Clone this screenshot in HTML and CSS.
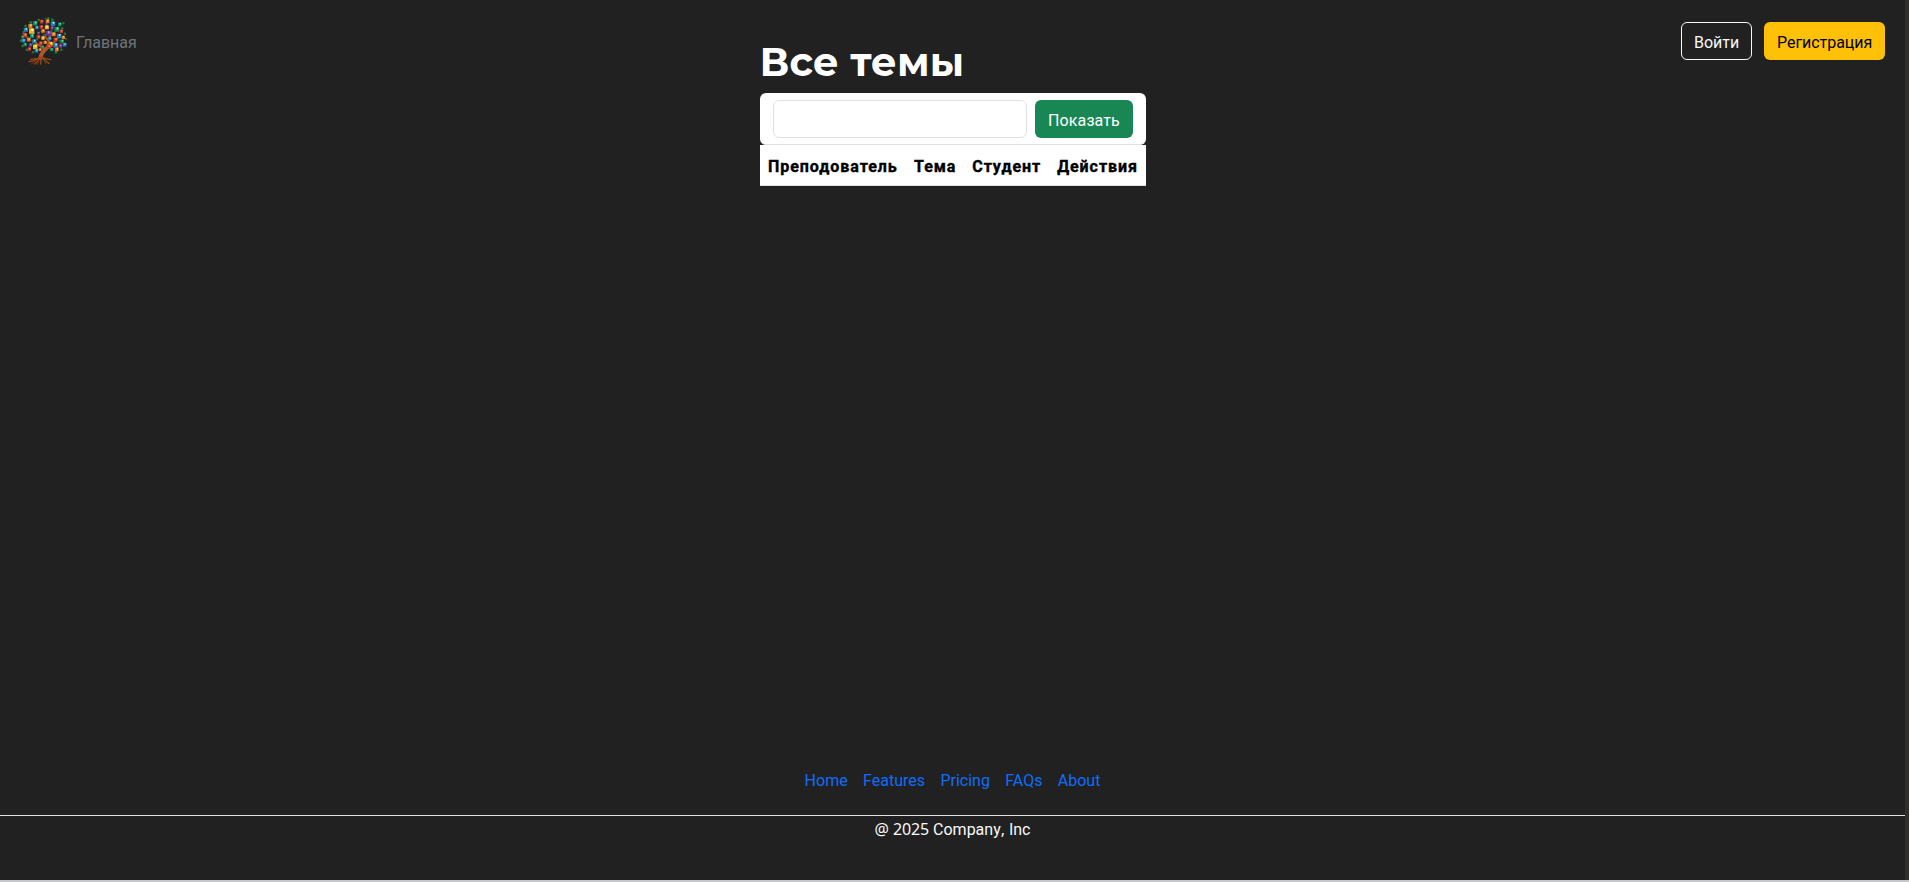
FILE: index.html
```html
<!DOCTYPE html>
<html lang="ru">
<head>
<meta charset="utf-8">
<title>Все темы</title>
<link rel="stylesheet" href="styles.css">
</head>
<body>
<div class="page">
<header class="header">
  <a class="brand" href="#">
    <svg class="tree" viewBox="0 0 180 168" id="tree" aria-hidden="true">
      <g fill="none" stroke="#ab5728" stroke-linecap="round">
        <path stroke-width="12" d="M79 139Q80 124 96 110"/>
        <path stroke-width="6" d="M88 118Q104 105 105 80M94 112Q117 104 122 89L133 76M91 112Q78 101 63 91M104 87L91 70M105 80L111 62"/>
        <path stroke-width="4" stroke="#984719" d="M76 136Q67 146 45 149M78 137Q72 148 62 156M81 137L80 156M84 136Q92 147 105 154M82 135Q94 142 110 143M73 139L50 142"/>
        <path stroke-width="3" stroke="#703819" d="M64 147L52 156M90 145L95 155M75 148L70 157M63 91L49 85M117 99L142 94M91 71L80 57"/>
      </g>
    </svg>
  </a>
  <a class="nav-link" href="#">Главная</a>
  <div class="auth">
    <a class="btn btn-outline" href="#">Войти</a>
    <a class="btn btn-warning" href="#">Регистрация</a>
  </div>
</header>
<main class="main">
  <h1 class="title">Все темы</h1>
  <form class="filter">
    <input class="field" type="text" aria-label="Преподователь">
    <button class="btn btn-success" type="button">Показать</button>
  </form>
  <table class="table">
    <thead><tr><th>Преподователь</th><th>Тема</th><th>Студент</th><th>Действия</th></tr></thead>
  </table>
</main>
<footer class="footer">
  <nav class="links"><a href="#">Home</a><a href="#">Features</a><a href="#">Pricing</a><a href="#">FAQs</a><a href="#">About</a></nav>
  <p class="copy"><span class="alt">@ 2025</span> Company<span class="alt">,</span> Inc</p>
</footer>
</div>
<script src="tree.js"></script>
</body>
</html>
```
FILE: styles.css
```css
* { box-sizing: border-box; }
html { background: #222; }
body {
  margin: 0;
  height: 882px;
  overflow: hidden;
  padding-right: 4px;
  background: #302f2d;
  border-bottom: 2px solid #c4c7cc;
  font: 16px/24px Roboto, sans-serif;
}
.page {
  height: 880px;
  display: flex;
  flex-direction: column;
  background: #212121;
  color: #fff;
}
a { text-decoration: none; }
.header {
  height: 82px;
  padding: 12px 20px 14px 14px;
  display: flex;
  align-items: center;
  margin-bottom: -42px;
}
.brand { display: flex; align-self: flex-start; }
.tree { width: 60px; height: 56px; }
.nav-link { color: #6c757d; padding: 5px 0 0 2px; }
.auth { margin-left: auto; display: flex; gap: 12px; align-self: flex-start; padding-top: 10px; }
.btn {
  height: 38px;
  padding: 8px 12px 4px;
  border: 1px solid transparent;
  border-radius: 6px;
  font: 16px/24px Roboto, sans-serif;
  white-space: nowrap;
}
.btn-outline { width: 71px; border-color: #f8f9fa; color: #f8f9fa; }
.btn-warning { width: 121px; background: #ffc107; color: #000; letter-spacing: -0.05px; }
.btn-success { width: 98px; padding-right: 11px; background: #198754; color: #fff; letter-spacing: 0.1px; }
.main { width: 386px; margin: 0 auto; display: flex; flex-direction: column; }
.title {
  margin: 0;
  height: 53px;
  font: 700 40px/44px Montserrat, Inter, sans-serif;
  letter-spacing: 0.15px;
  white-space: nowrap;
}
.filter {
  height: 52px;
  padding: 7px 13px;
  display: flex;
  gap: 8px;
  background: #fff;
  border-bottom: 1px solid #dee2e6;
  border-radius: 6px;
}
.field { width: 254px; height: 38px; border: 1px solid #dee2e6; border-radius: 6px; background: #fff; }
.table {
  width: 386px;
  height: 41px;
  border-collapse: collapse;
  background: #fff;
  color: #000;
  border-bottom: 1px solid #dee2e6;
}
.table th {
  padding: 10px 7px 6px 8.5px;
  font-weight: 700;
  text-align: left;
  line-height: 24px;
  letter-spacing: 0.95px;
  -webkit-text-stroke: 0.4px #000;
}
.footer { margin-top: auto; height: 112px; }
.links {
  height: 48px;
  padding-top: 1px;
  display: flex;
  justify-content: center;
  gap: 15.4px;
  border-bottom: 1px solid #dee2e6;
}
.links a { color: #0d6efd; }
.copy { margin: 2px 0 0; text-align: center; color: #f8f9fa; }
.alt { font-family: "Noto Sans", sans-serif; line-height: 1; letter-spacing: -0.1px; }
```
FILE: tree.js
```javascript
// Foliage of the logo: x, y, size and colour of each leaf.
const palette = { r: '#c93525', o: '#dd761e', y: '#edb52b', b: '#247fb5', t: '#17865e', g: '#176d32', p: '#65358d' };
const glow = { r: '#f39b82', o: '#ffd17a', y: '#fff3b0', b: '#a0e5f7', t: '#79dfac', g: '#299044', p: '#ba8bda' };
const leaves = [
  [79,24,6,'g'],[108,20,7,'g'],[121,24,7,'g'],[54,32,7,'g'],[38,42,6,'g'],[151,50,7,'g'],
  [160,65,6,'g'],[24,86,6,'g'],[29,102,6,'g'],[42,113,6,'g'],[61,121,6,'g'],[132,121,7,'g'],
  [149,113,6,'g'],[163,80,5,'g'],[155,34,6,'g'],[32,61,6,'g'],[44,76,5,'g'],[74,82,5,'g'],
  [58,96,5,'g'],[119,57,5,'g'],[98,68,5,'g'],[144,86,5,'g'],[64,64,5,'g'],[99,20,4,'g'],
  [68,34,11,'t'],[88,29,9,'r'],[106,28,9,'o'],[123,35,11,'b'],[144,37,9,'t'],[53,42,10,'o'],
  [39,53,10,'b'],[57,57,13,'y'],[73,47,8,'b'],[87,45,9,'r'],[104,46,10,'y'],[120,48,8,'p'],
  [135,52,12,'t'],[149,58,8,'r'],[36,70,11,'r'],[58,72,10,'t'],[78,63,7,'p'],[92,57,9,'o'],
  [108,64,13,'p'],[125,67,10,'o'],[142,72,11,'b'],[155,76,8,'o'],[32,86,9,'b'],[48,83,9,'o'],
  [65,88,10,'b'],[78,75,9,'r'],[92,78,8,'y'],[113,80,8,'b'],[131,83,10,'r'],[151,88,9,'t'],
  [37,98,8,'t'],[53,99,8,'p'],[68,104,11,'y'],[85,94,9,'r'],[99,91,8,'o'],[117,94,8,'y'],
  [131,100,11,'b'],[146,102,9,'p'],[50,111,8,'r'],[72,116,9,'b'],[91,105,7,'t'],[110,104,9,'r'],
  [119,113,8,'t'],[135,112,9,'o'],[159,98,9,'b'],[29,75,7,'t'],[83,113,7,'o'],[103,36,5,'p']
];
const tree = document.getElementById('tree');
function block(x, y, w, h, fill) {
  const r = document.createElementNS('http://www.w3.org/2000/svg', 'rect');
  for (const [k, v] of Object.entries({ x, y, width: w, height: h, rx: 1.5, fill })) r.setAttribute(k, v);
  tree.appendChild(r);
}
for (const [px, y, size, c] of leaves) {
  const x = 86 + (px - 91) * .97;
  const s = size * 1.22;
  block(x - s / 2, y - s / 2, s, s, palette[c]);
  block(x - 1, y - s / 2 + 1, s * .38, s * .45, glow[c]);
}
```
